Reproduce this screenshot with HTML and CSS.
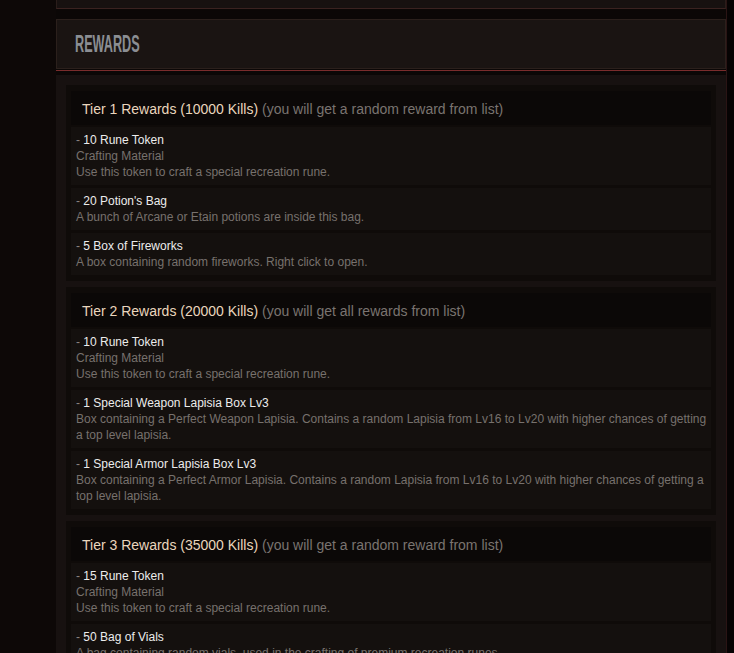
FILE: index.html
```html
<!DOCTYPE html>
<html>
<head>
<meta charset="utf-8">
<link rel="stylesheet" href="styles.css">
</head>
<body>
<div class="page">
  <div class="main">
    <div class="top-box"></div>
    <div class="section-head"><h2 class="section-title">REWARDS</h2></div>
    <div class="red-line"></div>
    <div class="content">
      <div class="tier">
        <div class="tier-head"><span class="tier-name">Tier 1 Rewards (10000 Kills)</span> <span class="tier-note">(you will get a random reward from list)</span></div>
        <div class="item"><div class="item-name"><span class="dash">-</span> 10 Rune Token</div><div class="item-desc">Crafting Material</div><div class="item-desc">Use this token to craft a special recreation rune.</div></div>
        <div class="item"><div class="item-name"><span class="dash">-</span> 20 Potion's Bag</div><div class="item-desc">A bunch of Arcane or Etain potions are inside this bag.</div></div>
        <div class="item"><div class="item-name"><span class="dash">-</span> 5 Box of Fireworks</div><div class="item-desc">A box containing random fireworks. Right click to open.</div></div>
      </div>
      <div class="tier">
        <div class="tier-head"><span class="tier-name">Tier 2 Rewards (20000 Kills)</span> <span class="tier-note">(you will get all rewards from list)</span></div>
        <div class="item"><div class="item-name"><span class="dash">-</span> 10 Rune Token</div><div class="item-desc">Crafting Material</div><div class="item-desc">Use this token to craft a special recreation rune.</div></div>
        <div class="item"><div class="item-name"><span class="dash">-</span> 1 Special Weapon Lapisia Box Lv3</div><div class="item-desc">Box containing a Perfect Weapon Lapisia. Contains a random Lapisia from Lv16 to Lv20 with higher chances of getting a top level lapisia.</div></div>
        <div class="item"><div class="item-name"><span class="dash">-</span> 1 Special Armor Lapisia Box Lv3</div><div class="item-desc">Box containing a Perfect Armor Lapisia. Contains a random Lapisia from Lv16 to Lv20 with higher chances of getting a top level lapisia.</div></div>
      </div>
      <div class="tier">
        <div class="tier-head"><span class="tier-name">Tier 3 Rewards (35000 Kills)</span> <span class="tier-note">(you will get a random reward from list)</span></div>
        <div class="item"><div class="item-name"><span class="dash">-</span> 15 Rune Token</div><div class="item-desc">Crafting Material</div><div class="item-desc">Use this token to craft a special recreation rune.</div></div>
        <div class="item"><div class="item-name"><span class="dash">-</span> 50 Bag of Vials</div><div class="item-desc">A bag containing random vials, used in the crafting of premium recreation runes.</div></div>
      </div>
    </div>
  </div>
</div>
</body>
</html>
```

FILE: styles.css
```css
* { box-sizing: border-box; }
html, body { margin: 0; padding: 0; }
body {
  background: #060303;
  font-family: "Liberation Sans", Arial, sans-serif;
  overflow: hidden;
  height: 653px;
}
.page {
  width: 727px;
  min-height: 653px;
  background: #0d0807;
  padding-left: 56px;
}
.main {
  width: 671px;
  border-right: 1px solid #2a1414;
  min-height: 653px;
  background: #0b0706;
}
.top-box {
  height: 9px;
  background: #171110;
  border: 1px solid #2a1d1a;
  border-top: none;
  border-bottom-color: #3a2220;
  margin-bottom: 10px;
}
.section-head {
  height: 50px;
  background: #1a1412;
  border: 1px solid #2b201c;
  padding: 11px 18px 0;
  margin-bottom: 1px;
}
.section-title {
  margin: 0;
  font-family: "Liberation Sans", Arial, sans-serif;
  font-weight: bold;
  font-size: 23px;
  line-height: 27px;
  color: #8b8e93;
  display: inline-block;
  transform: scaleX(0.55);
  transform-origin: left center;
}
.red-line {
  height: 1px;
  background: #7a2c2c;
  margin-bottom: 4px;
}
.content {
  background: #171110;
  border: 1px solid #21181500;
  padding: 9px 9px 20px;
  min-height: 600px;
}
.tier {
  background: #0f0b09;
  padding: 6px 5px 6px;
  margin-bottom: 6px;
}
.tier-head {
  background: #0b0807;
  height: 34px;
  padding: 9px 11px 0;
  font-size: 14px;
  line-height: 19px;
  white-space: nowrap;
}
.tier-name { color: #ead6bd; }
.tier-note { color: #7a7470; }
.item {
  background: #14100e;
  margin-top: 3px;
  padding: 5px 1px 5px 5px;
  font-size: 12px;
  line-height: 16px;
}
.tier-head + .item { margin-top: 2px; }
.item-name { color: #ececec; }
.dash { color: #8a8580; }
.item-desc { color: #77716d; }
```
